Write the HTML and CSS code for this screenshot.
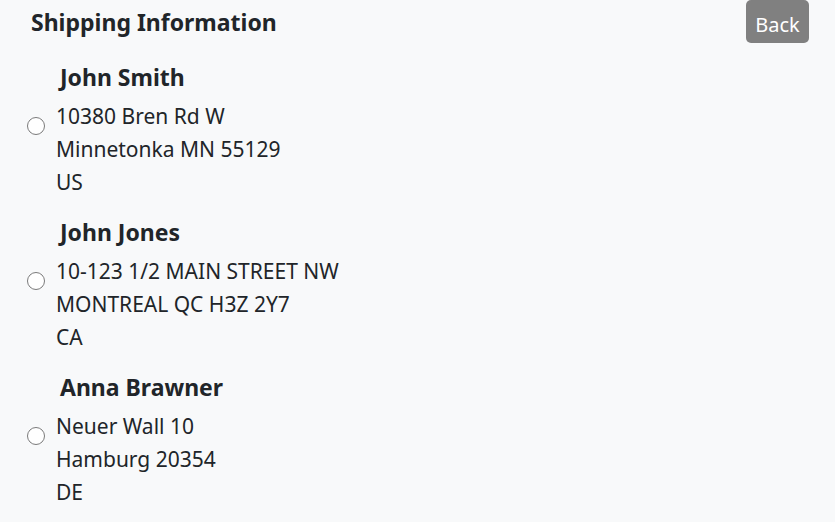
FILE: index.html
```html
<!DOCTYPE html>
<html>
<head>
<meta charset="utf-8">
<link rel="stylesheet" href="styles.css">
</head>
<body>
<div class="page">
  <div class="header">
    <h1 class="title">Shipping Information</h1>
    <button class="back">Back</button>
  </div>
  <div class="list">
    <div class="entry">
      <div class="name">John Smith</div>
      <label class="row">
        <input type="radio" name="addr" class="radio">
        <span class="lines">
          <span>10380 Bren Rd W</span>
          <span>Minnetonka MN 55129</span>
          <span>US</span>
        </span>
      </label>
    </div>
    <div class="entry">
      <div class="name">John Jones</div>
      <label class="row">
        <input type="radio" name="addr" class="radio">
        <span class="lines">
          <span>10-123 1/2 MAIN STREET NW</span>
          <span>MONTREAL QC H3Z 2Y7</span>
          <span>CA</span>
        </span>
      </label>
    </div>
    <div class="entry">
      <div class="name">Anna Brawner</div>
      <label class="row">
        <input type="radio" name="addr" class="radio">
        <span class="lines">
          <span>Neuer Wall 10</span>
          <span>Hamburg 20354</span>
          <span>DE</span>
        </span>
      </label>
    </div>
  </div>
</div>
</body>
</html>
```
FILE: styles.css
```css
html, body {
  margin: 0;
  padding: 0;
  background: #f8f9fa;
}
body {
  font-family: "Noto Sans", "Open Sans", sans-serif;
  color: #212529;
  width: 835px;
  height: 522px;
  overflow: hidden;
}
.page {
  padding: 0 26px 0 26px;
}
.header {
  display: flex;
  justify-content: space-between;
  align-items: flex-start;
}
.title {
  margin: 6px 0 0 5px;
  font-size: 23px;
  font-weight: 700;
  line-height: 32px;
}
.back {
  margin-top: 0;
  width: 63px;
  height: 43px;
  border: none;
  border-radius: 5px;
  background: #808080;
  color: #fff;
  font-family: inherit;
  font-size: 20px;
  padding: 5px 0 0 0;
}
.list {
  display: flex;
  flex-direction: column;
  gap: 18px;
  margin-top: 19px;
}
.name {
  margin-left: 34px;
  font-size: 23px;
  font-weight: 700;
  line-height: 30px;
}
.row {
  display: flex;
  align-items: flex-start;
  margin-top: 8px;
}
.radio {
  appearance: none;
  -webkit-appearance: none;
  box-sizing: border-box;
  margin: 17px 11px 0 1px;
  width: 18px;
  height: 18px;
  border: 1.5px solid #7a7a7a;
  border-radius: 50%;
  background: #fff;
  flex-shrink: 0;
}
.lines {
  display: flex;
  flex-direction: column;
  font-size: 21px;
  line-height: 33px;
}
```
